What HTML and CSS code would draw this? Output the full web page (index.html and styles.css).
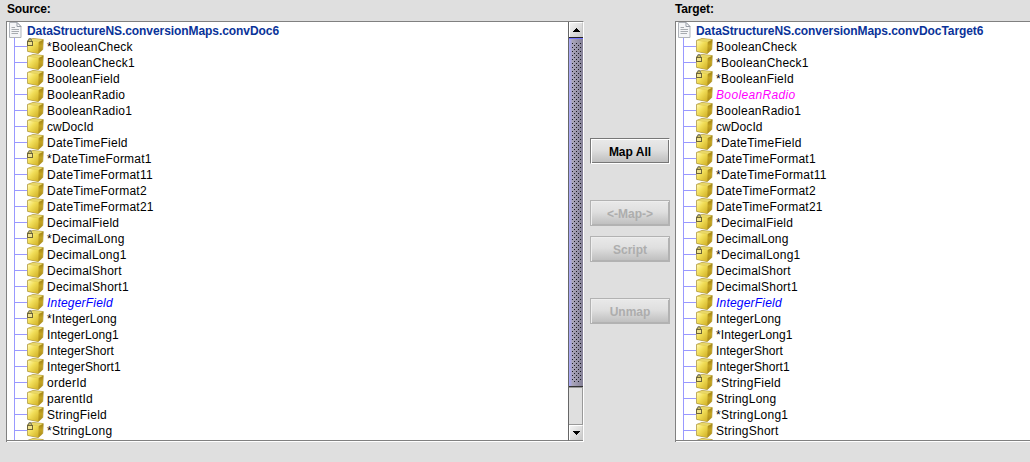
FILE: index.html
```html
<!DOCTYPE html>
<html lang="en">
<head>
<meta charset="utf-8">
<title>Field mapping</title>
<link rel="stylesheet" href="styles.css">
</head>
<body>
<svg class="defs" width="0" height="0" aria-hidden="true">
  <defs>
    <linearGradient id="front" x1="0" y1="0" x2="1" y2="1"><stop offset="0" stop-color="#fff8ae"/><stop offset=".4" stop-color="#f2df5a"/><stop offset="1" stop-color="#cfae22"/></linearGradient>
    <linearGradient id="face" x1="0" y1="0" x2="0" y2="1"><stop offset="0" stop-color="#9f8218"/><stop offset=".45" stop-color="#c5a522"/><stop offset="1" stop-color="#a98a18"/></linearGradient>
    <symbol id="cube" viewBox="0 0 17 16">
      <path d="M.6 2.4 6 .5 16.3 1.6 15.7 11.6 11.3 15.6 .6 13.4Z" fill="#d6bd3d" stroke="#a3892c" stroke-width=".7"/>
      <path d="M1 2.5 6 .8 16 1.8 11.8 4Z" fill="#e8d768"/>
      <path d="M1 2.7 11.8 4 11.3 15.2 1 13.1Z" fill="url(#front)"/>
      <path d="M11.8 4 16 1.9 15.4 11.4 11.3 15.2Z" fill="url(#face)"/>
    </symbol>
    <symbol id="lock" viewBox="0 0 17 16">
      <path d="M1.6 4V2.2Q1.6.6 3 .6T4.4 2.2V4" fill="none" stroke="#77775b" stroke-width="1.1"/>
      <rect x=".5" y="3.5" width="5" height="4" fill="#f0e28c" stroke="#6d6438"/>
    </symbol>
    <symbol id="doc" viewBox="0 0 14 16">
      <path d="M1.5.5H9L13 4.5V15.5H1.5Z" fill="#f4f5f7" stroke="#b0b4ba"/>
      <path d="M9 .5V4.5H13Z" fill="#fff" stroke="#959ba5"/>
      <path d="M3.5 5.5H7M3.5 7.5H11M3.5 9.5H11M3.5 11.5H10" stroke="#a7abb0"/>
    </symbol>
  </defs>
</svg>
<main class="mapper">
  <section class="side source">
    <h2 class="caption">Source:</h2>
    <div class="panel">
      <div class="tree" id="source"></div>
      <div class="scrollbar">
        <div class="arrow"><svg width="9" height="5" shape-rendering="crispEdges"><path d="M4 0h1v1h1v1h1v1h1v1H1V3h1V2h1V1h1z"/></svg></div>
        <div class="thumb"><svg class="bumps" width="10" height="340" shape-rendering="crispEdges"><defs><pattern id="dots" width="4" height="4" patternUnits="userSpaceOnUse"><path d="M0 0h1v1H0zM2 2h1v1H2z" fill="#181820"/></pattern></defs><rect width="10" height="340" fill="url(#dots)"/></svg></div>
        <div class="track"></div>
        <div class="arrow down"><svg width="9" height="5" shape-rendering="crispEdges"><path d="M1 0h7v1H7v1H6v1H5v1H4V3H3V2H2V1H1z"/></svg></div>
      </div>
    </div>
  </section>
  <div class="actions">
    <button class="btn map-all">Map All</button>
    <button class="btn map" disabled>&lt;-Map-&gt;</button>
    <button class="btn script" disabled>Script</button>
    <button class="btn unmap" disabled>Unmap</button>
  </div>
  <section class="side target">
    <h2 class="caption">Target:</h2>
    <div class="panel"><div class="tree" id="target"></div></div>
  </section>
</main>
<script src="tree.js"></script>
</body>
</html>
```
FILE: styles.css
```css
* { box-sizing: border-box; }
body { margin: 0; height: 462px; overflow: hidden; background: #dfdfdf; color: #000; font: 12px/16px "Liberation Sans", Arial, sans-serif; }
.defs { position: absolute; }
.mapper { display: flex; }
.side { flex: none; }
.source { width: 578px; margin-left: 6px; }
.target { width: 360px; }
.caption { margin: 0; padding: 1px 0 0 1px; height: 21px; font-size: 12px; line-height: 16px; font-weight: bold; letter-spacing: -.15px; }
.target .caption { padding-left: 0; }
.panel { display: flex; height: 421px; border: 1px solid #808080; border-right-color: #fff; border-bottom: 0; background: #fff; box-shadow: inset 0 -1px #fff; }
.tree { flex: 1; height: 419px; overflow: hidden; border-bottom: 1px solid #808080; }
.row { display: flex; height: 16px; white-space: nowrap; }
.root { padding-left: 1px; color: #0a3399; font-weight: bold; }
.root svg { flex: none; width: 14px; height: 16px; }
.root .label { margin-left: 5px; padding-top: 1px; letter-spacing: -.07px; }
.branch { flex: none; width: 13px; height: 16px; margin-left: 7px; border-left: 1px solid #9999ff; background: linear-gradient(#9999ff, #9999ff) 0 8px / 13px 1px no-repeat; }
.icon { flex: none; width: 17px; height: 16px; }
.row .label { line-height: 16px; }
.field .label { margin-left: 3px; padding-top: 1px; letter-spacing: .24px; }
.field .narrow { letter-spacing: .08px; }
.blue { color: #0000ff; font-style: italic; }
.magenta { color: #ff00ff; font-style: italic; }
.field .blue { letter-spacing: .2px; }
.field .magenta { letter-spacing: .35px; }
.scrollbar { display: flex; flex-direction: column; width: 15px; height: 419px; border-left: 1px solid #666; border-bottom: 1px solid #808080; }
.arrow { display: flex; align-items: center; justify-content: center; height: 15px; border: 1px solid #fff; border-right-color: #c8c8c8; border-bottom: 0; background: linear-gradient(135deg, #f4f4f4, #c8c8c8); }
.thumb { height: 350px; padding: 5px 0 0 3px; border-top: 1px solid #222; border-bottom: 1px solid #333; background: linear-gradient(90deg, #aaaaff 0, #a9a5ba 25%, #858197); box-shadow: inset 0 1px #7777ff; overflow: hidden; }
.bumps { display: block; }
.track { flex: 1; border: 1px solid #999; border-width: 1px 1px 1px 0; background: #dfdfdf; }
.actions { display: flex; flex-direction: column; width: 91px; padding: 138px 5px 0 6px; }
.btn { height: 26px; width: 80px; margin: 0; padding: 1px 0 0; border: 1px solid #777; box-shadow: inset 1px 1px #fff, inset -1px -1px #777; border-right-color: #fff; border-bottom-color: #fff; border-radius: 0; background: linear-gradient(#e9e9e9, #dfdfdf 45%, #bdbdbd); color: #000; font: bold 12px/16px "Liberation Sans", Arial, sans-serif; }
.btn:disabled { color: #adadad; border-color: #b2b2b2; box-shadow: inset 1px 1px #eee, inset -1px -1px #b2b2b2; }
.map { margin-top: 36px; }
.script { margin-top: 10px; }
.unmap { margin-top: 36px; }
```
FILE: tree.js
```js
// Names beginning with * are locked; "~" marks blue and "^" magenta mapped fields.
// A lone "-" is the partly scrolled row at the bottom, where only the icon shows.
const trees = {
  source: ["DataStructureNS.conversionMaps.convDoc6", "*BooleanCheck BooleanCheck1 BooleanField BooleanRadio BooleanRadio1 cwDocId DateTimeField *DateTimeFormat1 DateTimeFormat11 DateTimeFormat2 DateTimeFormat21 DecimalField *DecimalLong DecimalLong1 DecimalShort DecimalShort1 ~IntegerField *IntegerLong IntegerLong1 IntegerShort IntegerShort1 orderId parentId StringField *StringLong -"],
  target: ["DataStructureNS.conversionMaps.convDocTarget6", "BooleanCheck *BooleanCheck1 *BooleanField ^BooleanRadio BooleanRadio1 cwDocId *DateTimeField DateTimeFormat1 *DateTimeFormat11 DateTimeFormat2 DateTimeFormat21 *DecimalField DecimalLong *DecimalLong1 DecimalShort DecimalShort1 ~IntegerField IntegerLong *IntegerLong1 IntegerShort IntegerShort1 *StringField StringLong *StringLong1 StringShort -"]
};
for (const [id, [root, fields]] of Object.entries(trees)) {
  document.getElementById(id).innerHTML =
    `<div class="row root"><svg><use href="#doc"/></svg><span class="label">${root}</span></div>` +
    fields.split(" ").map(f => {
      const kind = f[0] === "~" ? " blue" : f[0] === "^" ? " magenta" : /^\*?(Integer|cw)/.test(f) ? " narrow" : "";
      const label = f === "-" ? "" : `<span class="label${kind}">${f.replace(/^[~^]/, "")}</span>`;
      return `<div class="row field"><span class="branch"></span><svg class="icon"><use href="#cube"/>${f[0] === "*" ? '<use href="#lock"/>' : ""}</svg>${label}</div>`;
    }).join("");
}
```
